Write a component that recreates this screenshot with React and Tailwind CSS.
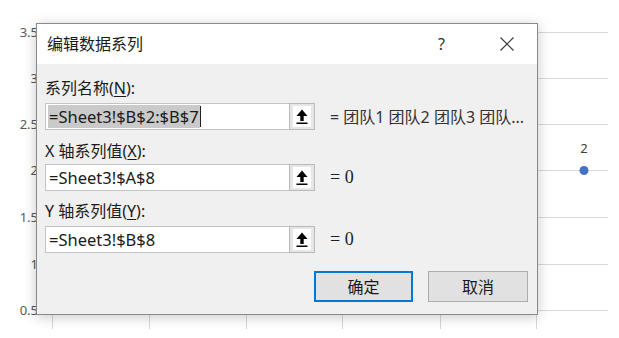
import React from "react";

const gridY = [32, 78, 124, 170, 217, 264, 310];
const yLabels = ["3.5", "3", "2.5", "2", "1.5", "1", "0.5"];
const gridX = [52, 149, 246, 342, 440, 536];

function Chart() {
  return (
    <svg width="619" height="338" className="block" style={{ fontFamily: '"Noto Sans", sans-serif' }}>
      {gridY.map((y) => (
        <line key={y} x1="44" x2="608" y1={y + 0.5} y2={y + 0.5} stroke="#d9d9d9" strokeWidth="1" />
      ))}
      {gridX.map((x) => (
        <line key={x} x1={x + 0.5} x2={x + 0.5} y1="32" y2="329" stroke="#d9d9d9" strokeWidth="1" />
      ))}
      {yLabels.map((t, i) => (
        <text key={t} x="38" y={gridY[i] + 5} textAnchor="end" fontSize="13" fill="#595959">
          {t}
        </text>
      ))}
      <text x="584" y="153" textAnchor="middle" fontSize="13" fill="#404040">2</text>
      <circle cx="584" cy="170.5" r="4.5" fill="#4472c4" />
    </svg>
  );
}

function RefButton() {
  return (
    <div className="w-[26px] h-full border border-[#b9b9b9] bg-[#e6e6e6] flex items-center justify-center">
      <div className="w-[18px] h-[21px] bg-white flex items-center justify-center">
        <svg width="12" height="16" viewBox="0 0 12 16">
          <polygon points="6,0.5 11.5,7 0.5,7" fill="#000" />
          <rect x="4.3" y="6" width="3.4" height="6" fill="#000" />
          <rect x="0.5" y="13.5" width="11" height="1.5" fill="#000" />
        </svg>
      </div>
    </div>
  );
}

function Field({ value, selected, right, serifRight }) {
  return (
    <div className="flex items-center h-[27px]">
      <div className="w-[244px] h-full bg-white border border-[#c4c4c4] border-r-0 flex items-center pl-[2px]">
        {selected ? (
          <span className="flex items-center">
            <span className="bg-[#cacaca] text-[#1a1a1a] text-[16.5px] leading-[23px] px-[1px]">{value}</span>
            <span className="w-[1px] h-[21px] bg-[#222]" />
          </span>
        ) : (
          <span className="text-[#1a1a1a] text-[16.5px] leading-[23px] pl-[1px]">{value}</span>
        )}
      </div>
      <RefButton />
      {serifRight ? (
        <span
          className="ml-[15px] text-[18px] text-[#222]"
          style={{ fontFamily: '"Liberation Serif", serif' }}
        >
          = 0
        </span>
      ) : (
        <span className="ml-[15px] text-[16px] text-[#333]">{right}</span>
      )}
    </div>
  );
}

function Label({ children, className }) {
  return <div className={"h-[20px] leading-[20px] text-[16px] text-[#1a1a1a] " + className}>{children}</div>;
}

export default function App() {
  return (
    <div
      className="relative w-[619px] h-[338px] bg-white overflow-hidden"
      style={{ fontFamily: '"Noto Sans", "Noto Sans CJK SC", sans-serif' }}
    >
      <Chart />
      <div className="absolute left-[36px] top-[23px] w-[502px] h-[292px] border border-[#8a8a8a] bg-[#f0f0f0] shadow-[0_2px_12px_rgba(0,0,0,0.22)] flex flex-col">
        <div className="h-[40px] bg-white flex items-center">
          <span className="ml-[10px] text-[16px] text-[#1a1a1a]">编辑数据系列</span>
          <span className="ml-auto text-[16px] text-[#333] mr-[55px]">?</span>
          <svg width="14" height="14" viewBox="0 0 14 14" className="mr-[23px]">
            <path d="M0.5 0.5 L13.5 13.5 M13.5 0.5 L0.5 13.5" stroke="#333" strokeWidth="1.1" fill="none" />
          </svg>
        </div>
        <div className="flex flex-col pl-[8px]">
          <Label className="mt-[14px]">
            系列名称(<span className="underline underline-offset-2">N</span>):
          </Label>
          <div className="mt-[5px]">
            <Field value="=Sheet3!$B$2:$B$7" selected right="= 团队1 团队2 团队3 团队..." />
          </div>
          <Label className="mt-[11px]">
            X 轴系列值(<span className="underline underline-offset-2">X</span>):
          </Label>
          <div className="mt-[3px]">
            <Field value="=Sheet3!$A$8" serifRight />
          </div>
          <Label className="mt-[10px]">
            Y 轴系列值(<span className="underline underline-offset-2">Y</span>):
          </Label>
          <div className="mt-[5px]">
            <Field value="=Sheet3!$B$8" serifRight />
          </div>
          <div className="flex mt-[18px] pl-[269px] gap-[15px]">
            <button className="w-[99px] h-[31px] border border-[#0078d7] bg-[#e1e1e1] text-[16px] text-[#1a1a1a] shadow-[inset_0_0_0_1px_#0078d7]">
              确定
            </button>
            <button className="w-[100px] h-[31px] border border-[#adadad] bg-[#e1e1e1] text-[16px] text-[#1a1a1a]">
              取消
            </button>
          </div>
        </div>
      </div>
    </div>
  );
}
